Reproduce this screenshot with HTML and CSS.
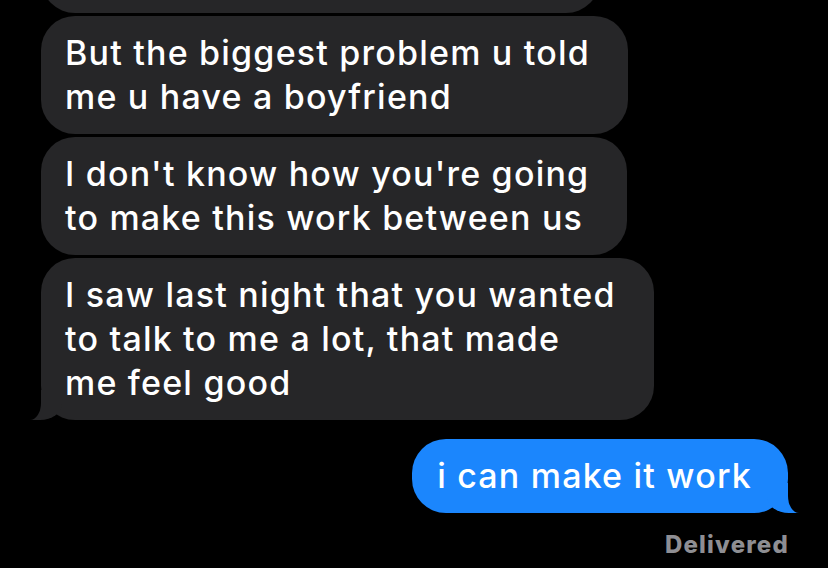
FILE: index.html
```html
<!DOCTYPE html>
<html lang="en">
<head>
    <meta charset="UTF-8">
    <meta name="viewport" content="width=device-width, initial-scale=1.0">
    <title>Messages</title>
    <link rel="stylesheet" href="styles.css">
</head>
<body>
    <div class="thread">
        <!-- previous message, scrolled out of view -->
        <div class="bubble them cut"></div>

        <div class="bubble them">But the biggest problem u told<br>me u have a boyfriend</div>
        <div class="bubble them">I don't know how you're going<br>to make this work between us</div>
        <div class="bubble them tail">I saw last night that you wanted<br>to talk to me a lot, that made<br>me feel good</div>

        <div class="bubble me tail">i can make it work</div>
        <div class="status">Delivered</div>
    </div>
</body>
</html>
```

FILE: styles.css
```css
body {
    margin: 0;
    padding: 0;
    background: #000;
    font-family: Inter, "Noto Sans", sans-serif;
    color: #fff;
    overflow: hidden;
}

.thread {
    display: flex;
    flex-direction: column;
    align-items: flex-start;
    gap: 3px;
    padding: 0 40px 0 41px;
}

.bubble {
    position: relative;
    z-index: 0;
    padding: 15px 38px 15px 24px;
    font-size: 34px;
    font-weight: 500;
    letter-spacing: 1.2px;
    line-height: 44px;
    border-radius: 34px;
}

.them {
    background: #262628;
}

.me {
    align-self: flex-end;
    margin-top: 16px;
    background: #1b86fd;
    padding: 15px 36px 15px 25px;
}

.cut {
    width: 559px;
    height: 44px;
    margin-top: -61px;
    box-sizing: content-box;
    padding: 15px 0;
}

/* the little tail under the last bubble */
.tail::before,
.tail::after {
    content: "";
    position: absolute;
    bottom: 0;
    height: 30px;
    z-index: -1;
}

.them.tail::before {
    left: -13px;
    width: 34px;
    background: #262628;
    border-bottom-right-radius: 22px 16px;
}

.them.tail::after {
    left: -22px;
    width: 22px;
    background: #000;
    border-bottom-right-radius: 11px 17px;
}

.me.tail::before {
    right: -13px;
    width: 34px;
    background: #1b86fd;
    border-bottom-left-radius: 22px 16px;
}

.me.tail::after {
    right: -22px;
    width: 22px;
    background: #000;
    border-bottom-left-radius: 11px 17px;
}

.status {
    align-self: flex-end;
    margin: 15px -1px 0 0;
    font-size: 24px;
    font-weight: 800;
    letter-spacing: 1.2px;
    line-height: 28px;
    color: #8e8e93;
}
```
